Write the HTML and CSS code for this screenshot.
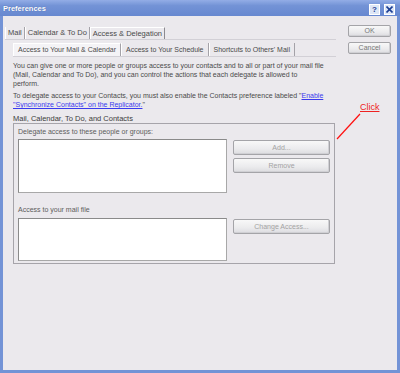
FILE: index.html
```html
<!DOCTYPE html>
<html lang="en">

<head>
    <meta charset="UTF-8">
    <title>Preferences</title>
    <link rel="stylesheet" href="styles.css">
</head>

<body>
    <div class="window">
        <div class="titlebar">
            <span class="title">Preferences</span>
            <span class="caption_btns">
                <span class="caption_btn">?</span>
                <span class="caption_btn">
                    <svg width="7" height="7" viewBox="0 0 7 7"><path d="M0.5 0.5 L6.5 6.5 M6.5 0.5 L0.5 6.5" stroke="#1c3f94" stroke-width="1.6"/></svg>
                </span>
            </span>
        </div>
        <div class="client">
            <div class="main">
                <ul class="tabs top_tabs">
                    <li>Mail</li>
                    <li>Calendar &amp; To Do</li>
                    <li class="active">Access &amp; Delegation</li>
                </ul>
                <div class="page">
                    <ul class="tabs sub_tabs">
                        <li class="active">Access to Your Mail &amp; Calendar</li>
                        <li>Access to Your Schedule</li>
                        <li>Shortcuts to Others' Mail</li>
                    </ul>
                    <p class="intro">You can give one or more people or groups access to your contacts and to all or part of your mail file (Mail, Calendar and To Do), and you can control the actions that each delegate is allowed to perform.</p>
                    <p class="intro second">To delegate access to your Contacts, you must also enable the Contacts preference labeled "<a href="javascript:;">Enable "Synchronize Contacts" on the Replicator.</a>"</p>
                    <div class="group_title">Mail, Calendar, To Do, and Contacts</div>
                    <div class="group">
                        <div class="label">Delegate access to these people or groups:</div>
                        <div class="row">
                            <div class="listbox"></div>
                            <div class="btns">
                                <span class="btn">Add...</span>
                                <span class="btn">Remove</span>
                            </div>
                        </div>
                        <div class="label second_label">Access to your mail file</div>
                        <div class="row">
                            <div class="listbox small"></div>
                            <div class="btns">
                                <span class="btn">Change Access...</span>
                            </div>
                        </div>
                    </div>
                </div>
            </div>
            <div class="side">
                <span class="btn side_btn">OK</span>
                <span class="btn side_btn">Cancel</span>
            </div>
        </div>
        <!-- annotation drawn over the dialog -->
        <div class="note">
            <span class="note_text">Click</span>
            <svg class="note_line" width="30" height="30" viewBox="0 0 30 30"><path d="M24 1 L1 26" stroke="#ff1010" stroke-width="1.2"/></svg>
        </div>
    </div>
</body>

</html>
```
FILE: styles.css
```css
* {
    padding: 0;
    margin: 0;
    list-style: none;
    box-sizing: border-box;
}

body {
    font-family: "Liberation Sans", Arial, sans-serif;
    font-size: 7px;
    color: #4a4a4a;
    background: #ebe9ed;
}

.window {
    width: 400px;
    height: 373px;
    position: relative;
    background: #ebe9ed;
    border: 3px solid #7393d6;
    border-top: none;
    display: flex;
    flex-direction: column;
}

.titlebar {
    height: 16px;
    margin: 0 -3px;
    padding: 0 5px 0 3px;
    display: flex;
    align-items: center;
    justify-content: space-between;
    background: linear-gradient(#93ade6, #7393d6 35%, #6788d0);
}

.title {
    color: #fff;
    font-weight: bold;
    font-size: 7.5px;
    text-shadow: 0 0 1px #3c5aa0;
}

.caption_btns {
    display: flex;
    gap: 4px;
    padding-top: 2px;
}

.caption_btn {
    width: 11px;
    height: 11px;
    border: 1px solid #fff;
    background: #dde6f6;
    color: #1c3f94;
    font-size: 8px;
    font-weight: bold;
    line-height: 9px;
    text-align: center;
    display: flex;
    align-items: center;
    justify-content: center;
}

.client {
    flex: 1;
    display: flex;
    padding: 9px 6px 0 2px;
}

.main {
    width: 331px;
}

.side {
    margin-left: auto;
    display: flex;
    flex-direction: column;
    gap: 5px;
}

.tabs {
    display: flex;
    border-bottom: 1px solid #d2d0d6;
}

.tabs li {
    padding: 0 2px;
    border-left: 1px solid #fff;
    border-right: 1px solid #a4a2a8;
    white-space: nowrap;
}

.top_tabs {
    margin-top: 2px;
    height: 13px;
}

.top_tabs li {
    line-height: 12px;
    font-size: 7.5px;
}

.top_tabs li.active {
    border-right-color: #8c8a90;
    border-top: 1px solid #fff;
    line-height: 11px;
}

.page {
    padding-left: 8px;
}

.sub_tabs {
    margin-top: 3px;
    height: 14px;
}

.sub_tabs li {
    line-height: 13px;
    padding: 0 4px;
}

.sub_tabs li.active {
    background: #f4f3f6;
    border-top: 1px solid #fff;
    line-height: 12px;
}

.intro {
    margin-top: 4px;
    line-height: 9px;
    width: 312px;
}

.intro.second {
    margin-top: 3px;
    width: 318px;
}

.intro a {
    color: #3a3aee;
}

.group_title {
    margin-top: 5px;
    line-height: 9px;
    font-size: 7.5px;
    color: #3c3c3c;
}

.group {
    width: 322px;
    border: 1px solid #a6a4aa;
    padding: 3px 4px 2px 4px;
}

.label {
    line-height: 9px;
    color: #5c5c5c;
    margin-bottom: 3px;
}

.second_label {
    margin-top: 12px;
    margin-bottom: 4px;
}

.row {
    display: flex;
    justify-content: space-between;
}

.listbox {
    width: 209px;
    height: 54px;
    background: #fff;
    border: 1px solid #a8a8a8;
    border-top-color: #8a8a8a;
    border-left-color: #8a8a8a;
}

.listbox.small {
    height: 43px;
}

.btns {
    width: 97px;
    display: flex;
    flex-direction: column;
    gap: 3px;
    padding-top: 1px;
}

.btn {
    display: block;
    height: 15px;
    line-height: 13px;
    text-align: center;
    color: #a2a2a2;
    border: 1px solid #a4a4a8;
    border-radius: 2px;
    background: linear-gradient(#f8f8f8, #ebebed 60%, #dcdce0);
    box-shadow: inset -1px -1px 0 #d0d0d4;
}

.side_btn {
    width: 43px;
    height: 12px;
    line-height: 10px;
    color: #777;
}

.note {
    position: absolute;
    left: 330px;
    top: 102px;
}

.note_text {
    position: absolute;
    left: 27px;
    top: 0;
    color: #ee2222;
    font-size: 9px;
    line-height: 10px;
    text-decoration: underline;
}

.note_line {
    position: absolute;
    left: 3px;
    top: 11px;
}
```
